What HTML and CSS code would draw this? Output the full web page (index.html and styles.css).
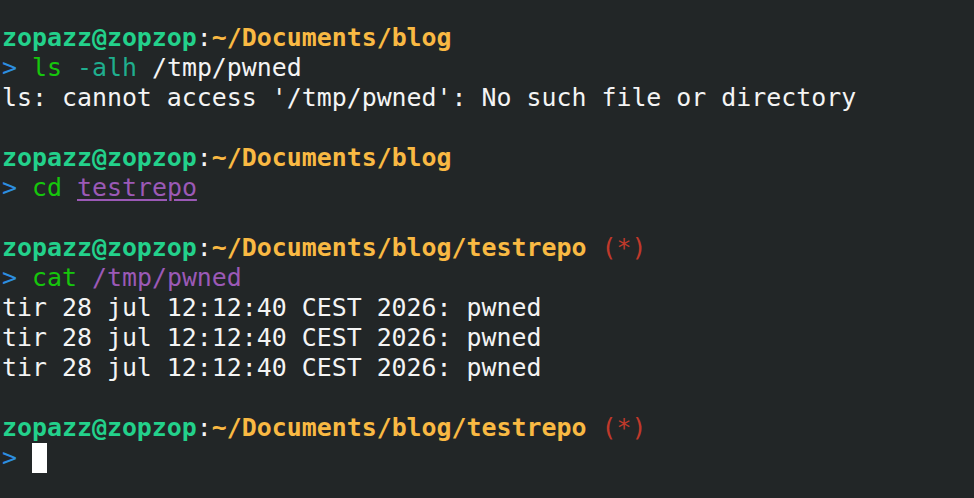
FILE: index.html
```html
<!DOCTYPE html>
<html>
<head>
<meta charset="utf-8">
<link rel="stylesheet" href="styles.css">
</head>
<body>
<div class="term">
<div class="line"><span class="user">zopazz@zopzop</span><span class="colon">:</span><span class="path">~/Documents/blog</span></div>
<div class="line"><span class="arrow">&gt;</span> <span class="cmd">ls</span> <span class="opt">-alh</span> /tmp/pwned</div>
<div class="line">ls: cannot access '/tmp/pwned': No such file or directory</div>
<div class="line"></div>
<div class="line"><span class="user">zopazz@zopzop</span><span class="colon">:</span><span class="path">~/Documents/blog</span></div>
<div class="line"><span class="arrow">&gt;</span> <span class="cmd">cd</span> <span class="dir">testrepo</span></div>
<div class="line"></div>
<div class="line"><span class="user">zopazz@zopzop</span><span class="colon">:</span><span class="path">~/Documents/blog/testrepo</span> <span class="dirty">(*)</span></div>
<div class="line"><span class="arrow">&gt;</span> <span class="cmd">cat</span> <span class="arg">/tmp/pwned</span></div>
<div class="line">tir 28 jul 12:12:40 CEST 2026: pwned</div>
<div class="line">tir 28 jul 12:12:40 CEST 2026: pwned</div>
<div class="line">tir 28 jul 12:12:40 CEST 2026: pwned</div>
<div class="line"></div>
<div class="line"><span class="user">zopazz@zopzop</span><span class="colon">:</span><span class="path">~/Documents/blog/testrepo</span> <span class="dirty">(*)</span></div>
<div class="line"><span class="arrow">&gt;</span> <span class="cursor"> </span></div>
</div>
</body>
</html>
```
FILE: styles.css
```css
html, body {
  margin: 0;
  padding: 0;
  background: #222627;
  height: 100%;
  overflow: hidden;
}
.term {
  padding: 23px 0 0 2px;
  font-family: "DejaVu Sans Mono", monospace;
  font-size: 24.9px;
  line-height: 30px;
  color: #f4f4f4;
}
.line {
  height: 30px;
  white-space: pre;
}
.user {
  color: #23d18b;
  font-weight: bold;
}
.colon {
  color: #f4f4f4;
}
.path {
  color: #f9b943;
  font-weight: bold;
}
.dirty {
  color: #c0392b;
}
.arrow {
  color: #2d8fe0;
}
.cmd {
  color: #16c60c;
}
.opt {
  color: #1fae8e;
}
.dir {
  color: #9b59b6;
  text-decoration: underline;
  text-underline-offset: 3px;
}
.arg {
  color: #9b59b6;
}
.cursor {
  display: inline-block;
  width: 15px;
  height: 30px;
  background: #ffffff;
  vertical-align: top;
}
```
